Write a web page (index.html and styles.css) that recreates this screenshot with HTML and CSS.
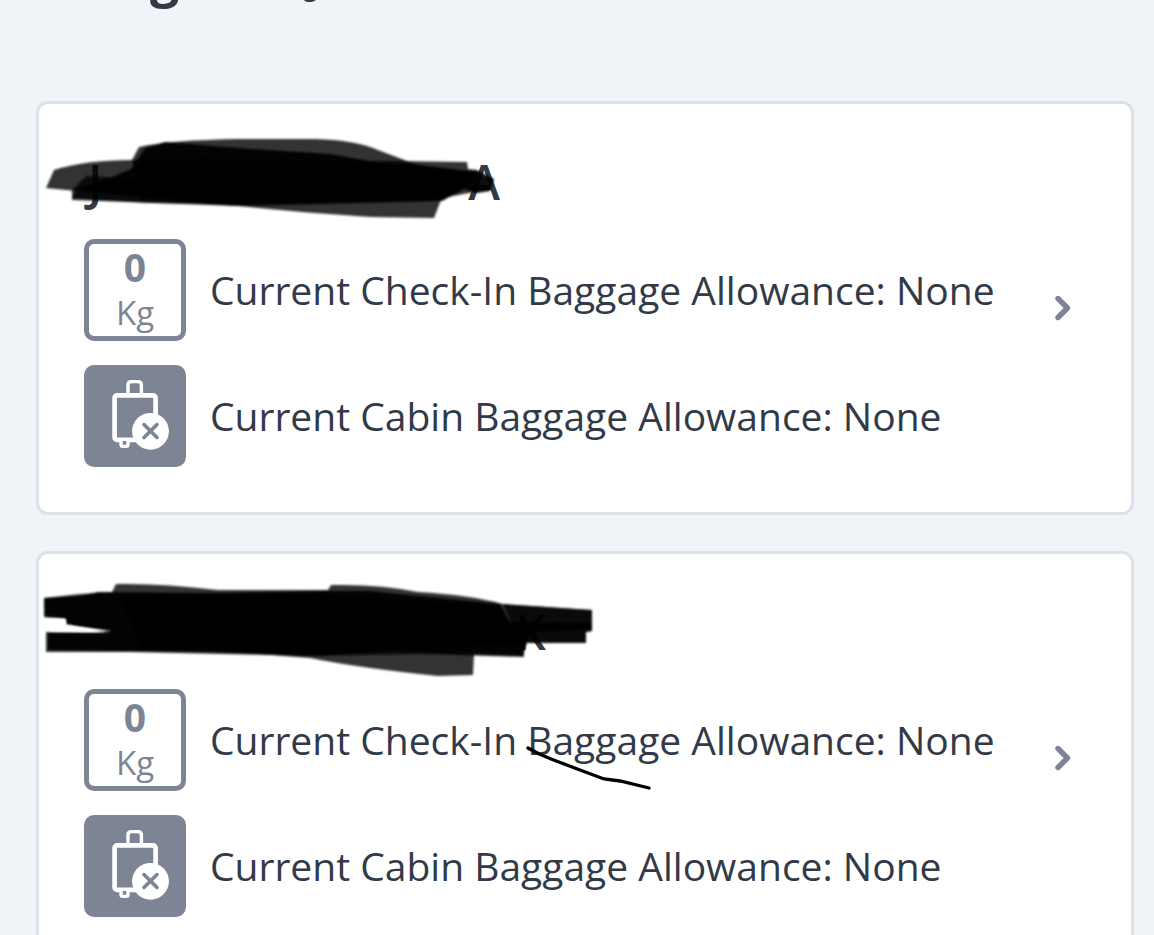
FILE: index.html
```html
<!DOCTYPE html>
<html lang="en">
<head>
<meta charset="utf-8">
<meta name="viewport" content="width=device-width, initial-scale=1">
<title>Baggage</title>
<link rel="stylesheet" href="styles.css">
</head>
<body>
<svg class="defs" width="0" height="0" aria-hidden="true">
  <symbol id="cabin" viewBox="0 0 102 102">
    <path d="M44 29V20q0-3.400 3.400-3.400H54q3.400 0 3.400 3.400V29" fill="none" stroke="#fff" stroke-width="3.400"/>
    <rect x="30.600" y="30.400" width="41" height="44.500" rx="2.500" fill="none" stroke="#fff" stroke-width="4.700"/>
    <path d="M37 76v3.500q0 1.900 1.900 1.900h3.200q1.900 0 1.900-1.900V76" fill="#7d8594" stroke="#fff" stroke-width="3.400"/>
    <circle cx="66.500" cy="66.300" r="18.400" fill="#fff"/>
    <path d="M60 59.600l13 13M73 59.600l-13 13" stroke="#7d8594" stroke-width="3.600" stroke-linecap="round"/>
  </symbol>
  <symbol id="chevron" viewBox="0 0 18 28">
    <path d="M4 4.500l9.500 9.500L4 23.500" fill="none" stroke="#7d8594" stroke-width="5.400" stroke-linecap="round" stroke-linejoin="round"/>
  </symbol>
</svg>
<main class="page">
  <header class="heading"><h1 class="title"><span>g</span><span class="title-small">g</span></h1></header>

  <section class="card">
    <div class="details">
      <h2 class="name name-first"><span>J</span><span>A</span>
        <svg class="marker" width="560" height="100" viewBox="40 130 560 100" aria-hidden="true">
          <g class="ink">
            <path class="light" d="M46 188L54 170Q85 160 132 160L400 161L467 162L468 169L478 170L479 191L443 198L240 204L150 203L72 198L76 191Z"/>
            <path class="light" d="M132 160L139 147Q170 140 240 139L315 139Q355 140 378 150L415 164L460 172L440 200L140 199Z"/>
            <path class="light" d="M72 200V190L86 176L320 186L441 200L434 218L372 217Q320 214 238 206Z"/>
            <path class="dark" d="M110 178L131 169L145 148L165 142Q260 150 330 154L420 170L478 171L494 179L490 191L477 193L464 189L442 201L240 206L205 204L165 199L74 190Q90 184 110 178Z"/>
            <path class="dark" d="M130 170L200 158L410 164L478 172L462 190L442 200L245 203L160 194Z"/>
          </g>
        </svg>
      </h2>
      <div class="row"><div class="badge"><strong class="amount">0</strong><span class="unit">Kg</span></div><p class="text">Current Check-In Baggage Allowance: None</p></div>
      <div class="row"><svg class="badge cabin" aria-hidden="true"><use href="#cabin"/></svg><p class="text">Current Cabin Baggage Allowance: None</p></div>
    </div>
    <button class="open" type="button" aria-label="Open baggage options"><svg width="18" height="28"><use href="#chevron"/></svg></button>
  </section>

  <section class="card">
    <div class="details">
      <h2 class="name name-second"><span>K</span>
        <svg class="marker" width="560" height="100" viewBox="40 580 560 100" aria-hidden="true">
          <g class="ink">
            <path class="light" d="M112 592L116 584Q160 583 218 590L328 590L331 585Q380 584 418 592Q470 595 503 604L592 610V631L586 632V643H524V657L420 654L315 656L130 652L46 652V632H110L66 624L66 618L44 617V598L80 594Z"/>
            <path class="light" d="M503 604L592 610V631L586 632V643H520Z"/>
            <path class="light" d="M230 652L315 635L474 654L473 675L438 676Q360 668 310 658Z"/>
            <path class="dark" d="M44 598L80 596L98 592L220 593L326 591L370 591L500 604L510 622L592 623V630L530 632L523 656L420 652L400 650L315 656L210 652L48 650V633L111 633L66 624V619L45 617Z"/>
            <path class="dark" d="M120 595L320 594L500 606L520 645L315 652L140 648Z"/>
          </g>
          <path class="gap" d="M66 626L88 628L112 631L90 632L50 631V619H65Z"/>
        </svg>
      </h2>
      <div class="row"><div class="badge"><strong class="amount">0</strong><span class="unit">Kg</span></div><p class="text">Current Check-In Baggage Allowance: None
        <svg class="stroke" width="128" height="48" viewBox="525 744 128 48" aria-hidden="true"><path d="M528 748Q538 754 551 759L580 770L604 779L620 781L649 788" fill="none" stroke="#000" stroke-width="3.300" stroke-linecap="round"/></svg></p></div>
      <div class="row"><svg class="badge cabin" aria-hidden="true"><use href="#cabin"/></svg><p class="text">Current Cabin Baggage Allowance: None</p></div>
    </div>
    <button class="open" type="button" aria-label="Open baggage options"><svg width="18" height="28"><use href="#chevron"/></svg></button>
  </section>
</main>
</body>
</html>
```
FILE: styles.css
```css
* { box-sizing: border-box; }
html { overflow: hidden; }
body {
  margin: 0;
  background: #f0f4f8;
  color: #323a48;
  font-family: "Open Sans", "Noto Sans", sans-serif;
}
h1, h2, p { margin: 0; }
.defs { position: absolute; }
.page {
  display: flex;
  flex-direction: column;
  gap: 36px;
  padding: 0 20px 36px 36px;
}
.heading { height: 65px; }
.title {
  display: flex;
  align-items: baseline;
  gap: 124px;
  margin-top: -60px;
  padding-left: 114px;
  font-size: 52px;
  line-height: 72px;
}
.title-small { font-size: 24px; }
.card {
  display: flex;
  align-items: center;
  justify-content: space-between;
  padding: 45px 59px 45px 45px;
  border: 3px solid #dde1e8;
  border-radius: 12px;
  background: #fff;
}
.details {
  display: flex;
  flex-direction: column;
  gap: 24px;
}
.name {
  position: relative;
  display: flex;
  justify-content: space-between;
  font-size: 48px;
  font-weight: 600;
  line-height: 66px;
}
.name-first { width: 416px; padding-left: 4px; }
.name-second { width: 462px; justify-content: flex-end; }
.marker {
  position: absolute;
  top: -19px;
  left: -44px;
}
.ink { filter: blur(1px); }
.light { fill: #000; opacity: 0.8; }
.dark { fill: #000; opacity: 0.94; }
.gap { fill: #fff; filter: blur(1px); }
.row {
  display: flex;
  align-items: center;
  gap: 24px;
}
.badge {
  display: flex;
  flex: none;
  flex-direction: column;
  width: 102px;
  height: 102px;
  border: 5px solid #7d8594;
  border-radius: 10px;
  color: #7d8594;
  text-align: center;
  line-height: 46px;
}
.cabin { border: 0; background: #7d8594; }
.amount { font-size: 39px; }
.unit { font-size: 33px; }
.text { position: relative; font-size: 39px; line-height: 54px; }
.stroke { position: absolute; top: 31px; left: 315px; }
.open {
  display: flex;
  padding: 0;
  border: 0;
  background: none;
}
```
